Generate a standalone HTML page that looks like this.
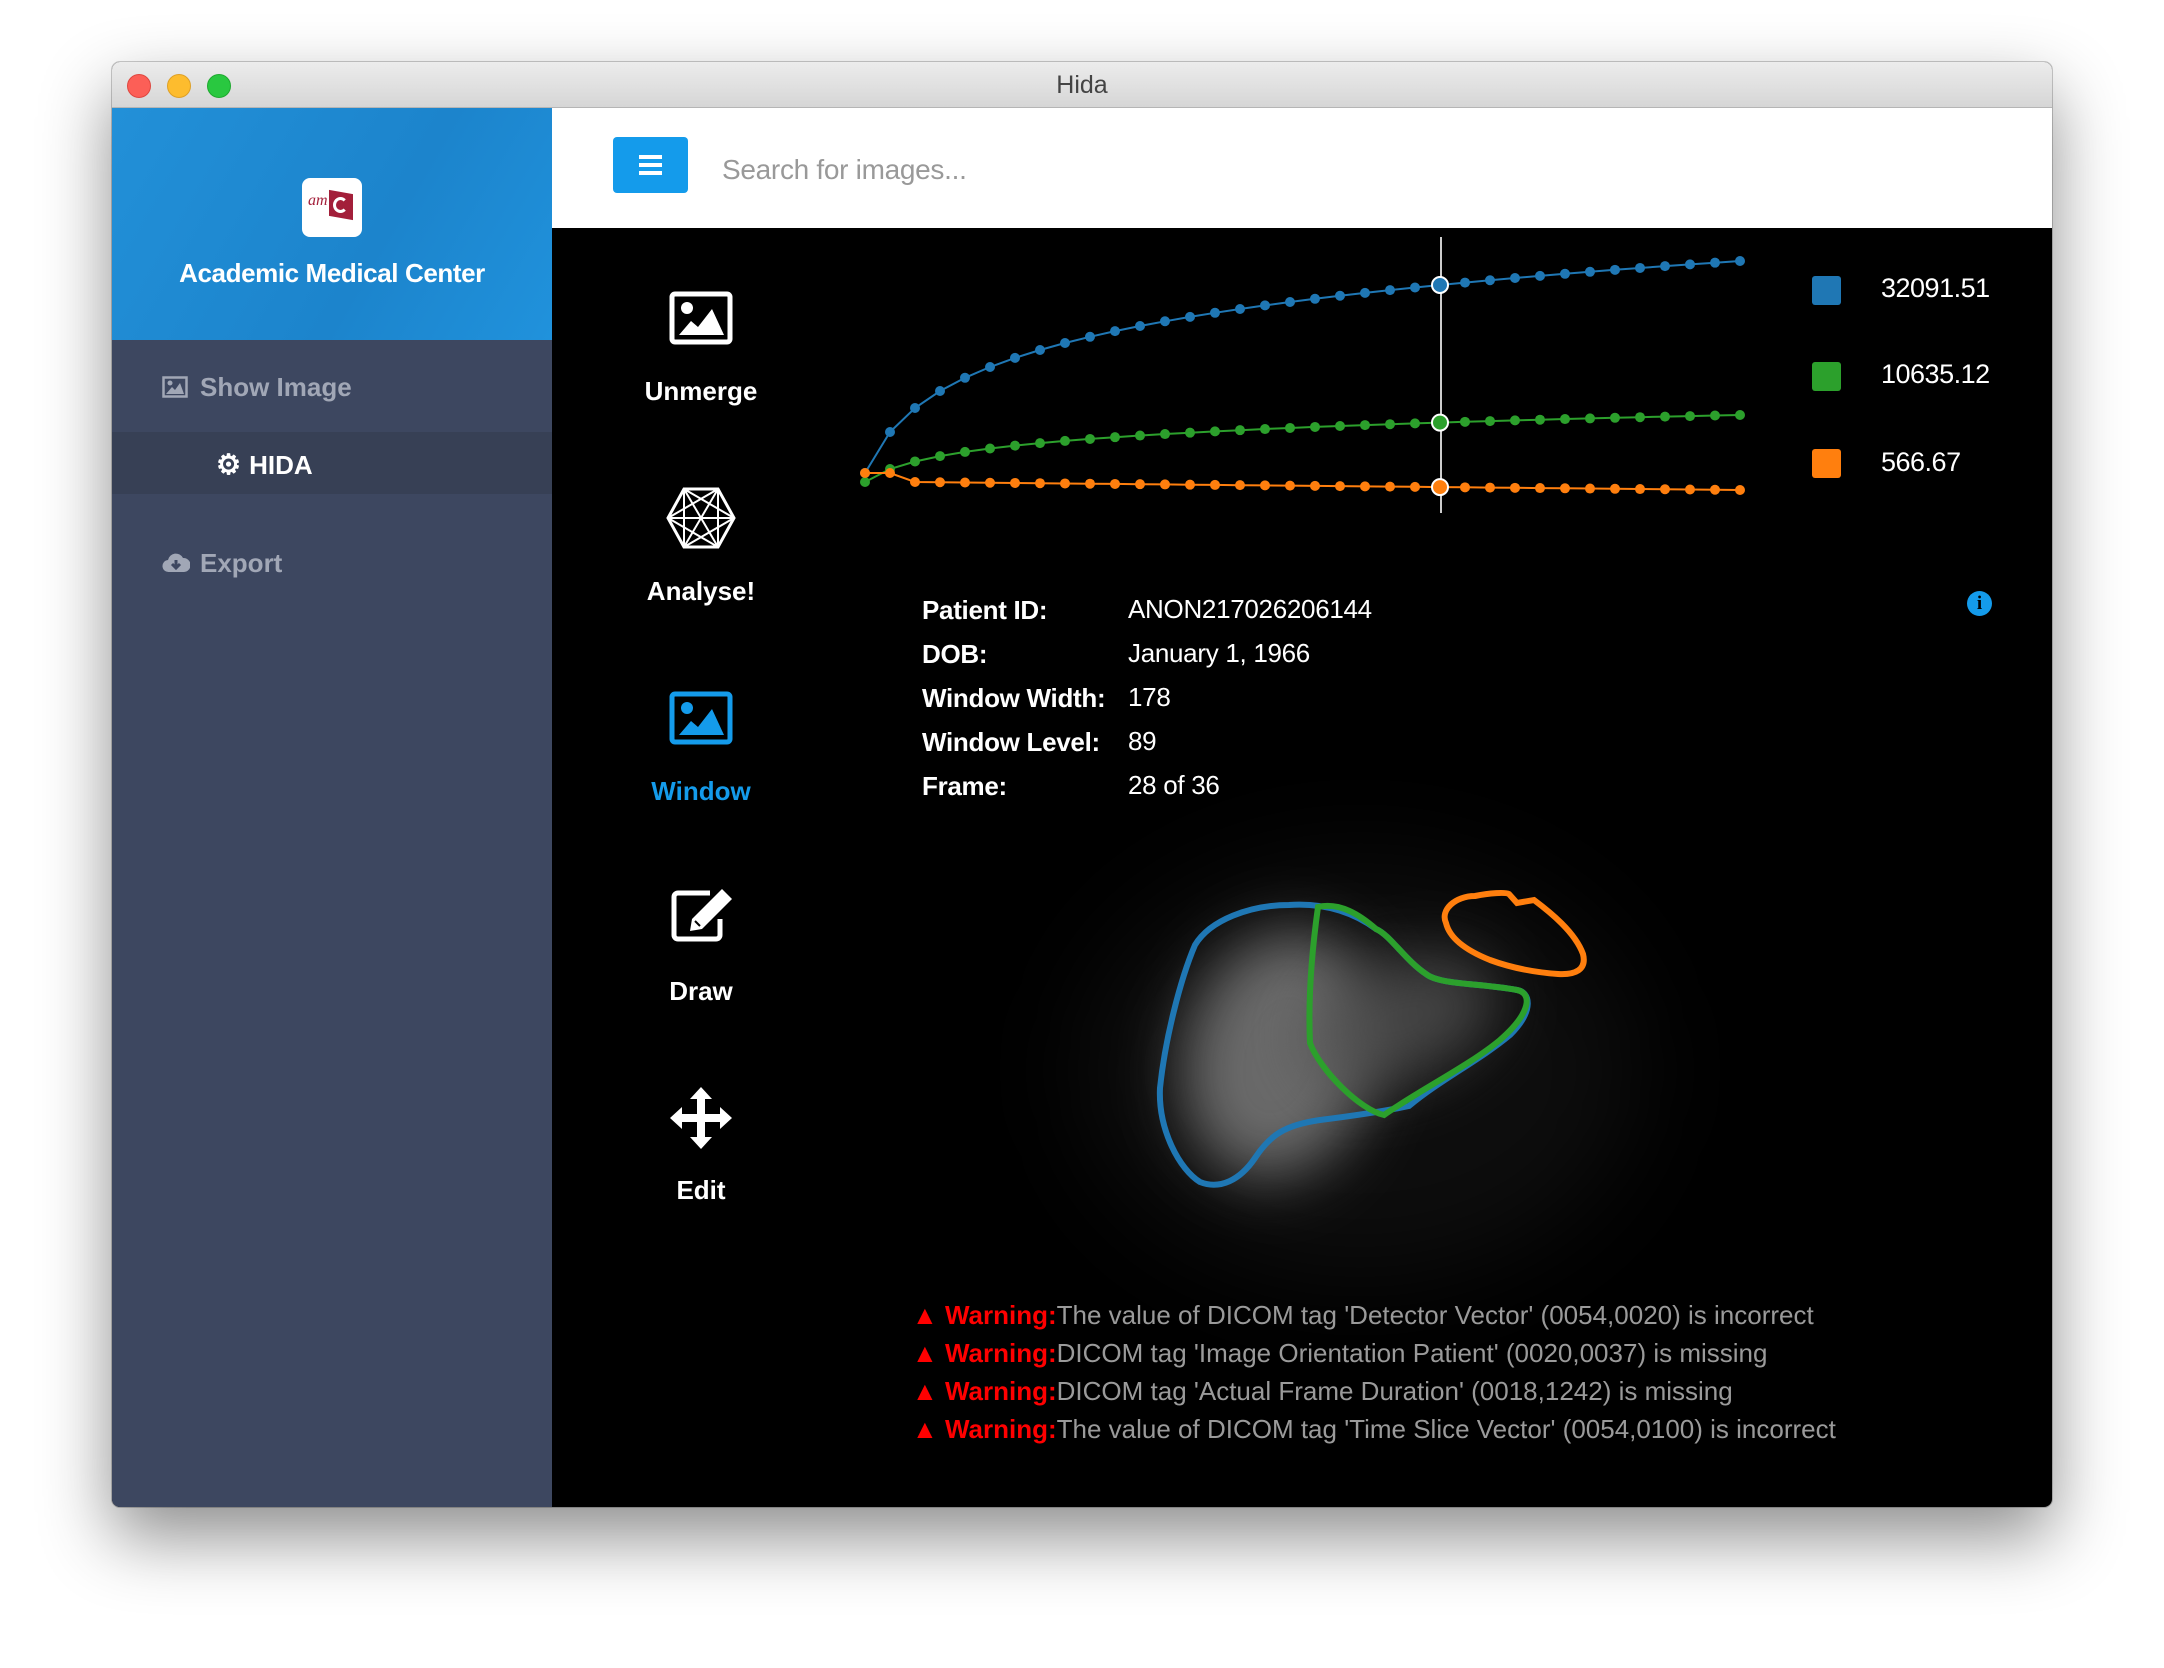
<!DOCTYPE html>
<html><head><meta charset="utf-8">
<style>
*{margin:0;padding:0;box-sizing:border-box}
body{width:2164px;height:1668px;background:#fff;font-family:"Liberation Sans",Arial,sans-serif;position:relative;overflow:hidden}
.abs{position:absolute}
.win{left:112px;top:62px;width:1940px;height:1445px;border-radius:8px;overflow:hidden;box-shadow:0 30px 70px rgba(0,0,0,.45),0 0 0 1px rgba(0,0,0,.2);background:#000}
.title{left:0;top:0;width:1940px;height:46px;background:linear-gradient(#ececec,#d6d6d6);border-bottom:1px solid #b5b5b5;text-align:center;font-size:25px;line-height:46px;color:#444}
.dot{top:12px;width:24px;height:24px;border-radius:50%}
.side{left:0;top:46px;width:440px;height:1399px;background:#3d4760}
.head{left:0;top:0;width:440px;height:232px;background:linear-gradient(120deg,#2290d8,#1c84cc 60%,#2092dc)}
.lbl{color:#fff;font-weight:bold;font-size:26px;text-align:center;width:200px;left:489px}
.k{left:922px;color:#fff;font-weight:bold;font-size:26px;letter-spacing:-0.3px}
.v{left:1016px;color:#fff;font-size:26px;letter-spacing:-0.3px}
.w{left:800px;font-size:26px;color:#9a9a9a;white-space:nowrap;letter-spacing:0}
.w b{color:#f00}
</style></head><body>
<div class="abs win">
  <div class="abs title">Hida
    <div class="abs dot" style="left:15px;background:#fc5f57;border:1px solid #de4740"></div>
    <div class="abs dot" style="left:55px;background:#fdbc2e;border:1px solid #dea026"></div>
    <div class="abs dot" style="left:95px;background:#29c840;border:1px solid #1ea92f"></div>
  </div>
  <div class="abs side">
    <div class="abs head">
      <div class="abs" style="left:190px;top:70px;width:60px;height:59px;background:#fff;border-radius:8px">
        <span class="abs" style="left:6px;top:14px;font-family:'Liberation Serif',serif;font-style:italic;font-size:16px;color:#a31f3a">am</span>
        <div class="abs" style="left:27px;top:14px;width:24px;height:26px;background:#a31f3a;transform:skewY(10deg)"></div>
        <div class="abs" style="left:31px;top:19px;width:15px;height:16px;border:3px solid #fff;border-right-color:transparent;border-radius:50%"></div>
      </div>
      <div class="abs" style="left:0;width:440px;top:150px;text-align:center;color:#fff;font-weight:bold;font-size:26px;letter-spacing:-0.4px">Academic Medical Center</div>
    </div>
    <div class="abs" style="left:50px;top:264px;color:#a1a7b6;font-weight:bold;font-size:26px">
      <svg width="26" height="22" viewBox="0 0 26 22" style="vertical-align:-2px;margin-right:12px"><rect x="1.5" y="1.5" width="23" height="19" fill="none" stroke="#a1a7b6" stroke-width="2.5"/><circle cx="8" cy="7" r="2.5" fill="#a1a7b6"/><path d="M4 18 L10 11 L13 14 L18 7 L22 18Z" fill="#a1a7b6"/></svg>Show Image</div>
    <div class="abs" style="left:0;top:324px;width:440px;height:62px;background:#374055"></div>
    <div class="abs" style="left:104px;top:340px;color:#fff;font-weight:bold;font-size:26px">
      <span style="font-size:28px;margin-right:8px">⚙</span>HIDA</div>
    <div class="abs" style="left:50px;top:440px;color:#a1a7b6;font-weight:bold;font-size:26px">
      <svg width="28" height="22" viewBox="0 0 28 22" style="vertical-align:-2px;margin-right:10px"><path d="M7 20 A6 6 0 0 1 6 8 A8 8 0 0 1 21 6 A6 6 0 0 1 22 20Z" fill="#a1a7b6"/><path d="M14 8 V16 M10 12 L14 16 L18 12" stroke="#3d4760" stroke-width="3" fill="none"/></svg>Export</div>
  </div>
  <div class="abs" style="left:440px;top:46px;width:1500px;height:120px;background:#fff">
    <div class="abs" style="left:61px;top:29px;width:75px;height:56px;background:#149beb;border-radius:4px">
      <div class="abs" style="left:26px;top:18px;width:23px;height:4px;background:#fff"></div>
      <div class="abs" style="left:26px;top:26px;width:23px;height:4px;background:#fff"></div>
      <div class="abs" style="left:26px;top:34px;width:23px;height:4px;background:#fff"></div>
    </div>
    <div class="abs" style="left:170px;top:46px;font-size:28px;color:#999;letter-spacing:-0.3px">Search for images...</div>
  </div>
</div>

<svg class="abs" style="left:669px;top:291px" width="64" height="54" viewBox="0 0 64 54"><rect x="3" y="3" width="58" height="48" rx="3" fill="none" stroke="#fff" stroke-width="5"/><circle cx="18" cy="17" r="6" fill="#fff"/><path d="M10 44 L22 30 L29 36 L43 18 L55 44Z" fill="#fff"/></svg>
<div class="abs lbl" style="top:376px;left:601px">Unmerge</div>
<svg class="abs" style="left:666px;top:486px" width="70" height="64" viewBox="0 0 70 64" fill="none" stroke="#fff" stroke-width="2"><path d="M18 3 H52 L68 32 L52 61 H18 L2 32Z" stroke-width="3"/><path d="M18 3 L52 61 M52 3 L18 61 M2 32 L52 3 M2 32 L52 61 M68 32 L18 3 M68 32 L18 61 M18 3 L18 61 M52 3 L52 61 M2 32 H68"/></svg>
<div class="abs lbl" style="top:576px;left:601px">Analyse!</div>
<svg class="abs" style="left:669px;top:691px" width="64" height="54" viewBox="0 0 64 54"><rect x="3" y="3" width="58" height="48" rx="3" fill="none" stroke="#149beb" stroke-width="5"/><circle cx="18" cy="17" r="6" fill="#149beb"/><path d="M10 44 L22 30 L29 36 L43 18 L55 44Z" fill="#149beb"/></svg>
<div class="abs lbl" style="top:776px;left:601px;color:#149beb">Window</div>
<svg class="abs" style="left:670px;top:887px" width="64" height="56" viewBox="0 0 64 56"><path d="M40 6 H8 A4 4 0 0 0 4 10 V48 A4 4 0 0 0 8 52 H46 A4 4 0 0 0 50 48 V32" fill="none" stroke="#fff" stroke-width="5"/><path d="M52 2 L62 12 L32 42 L20 44 L22 32Z" fill="#fff"/><path d="M25 34 L30 39" stroke="#000" stroke-width="2"/></svg>
<div class="abs lbl" style="top:976px;left:601px">Draw</div>
<svg class="abs" style="left:670px;top:1087px" width="62" height="62" viewBox="0 0 62 62" fill="#fff"><path d="M31 0 L42 12 H35 V27 H50 V20 L62 31 L50 42 V35 H35 V50 H42 L31 62 L20 50 H27 V35 H12 V42 L0 31 L12 20 V27 H27 V12 H20Z"/></svg>
<div class="abs lbl" style="top:1175px;left:601px">Edit</div>

<!-- liver blob -->
<div class="abs" style="left:1080px;top:860px;width:560px;height:420px;border-radius:50%;background:rgba(25,25,25,.5);filter:blur(50px)"></div>
<div class="abs" style="left:1185px;top:930px;width:190px;height:250px;border-radius:50%;background:rgba(115,115,115,.9);filter:blur(30px);transform:rotate(15deg)"></div>
<div class="abs" style="left:1300px;top:960px;width:200px;height:120px;border-radius:50%;background:rgba(80,80,80,.8);filter:blur(30px);transform:rotate(-20deg)"></div>

<svg class="abs" style="left:0;top:0" width="2164" height="1668" id="ch" fill="none">
<line x1="1441" y1="237" x2="1441" y2="513" stroke="#ccc" stroke-width="2"/>
<path d="M1289 905 C1250 905 1210 920 1195 945 C1180 980 1165 1040 1160 1088 C1158 1130 1180 1170 1200 1182 C1220 1190 1240 1180 1255 1158 C1270 1135 1285 1125 1320 1120 C1360 1115 1390 1110 1409 1106 C1440 1080 1480 1060 1510 1035 C1535 1010 1530 992 1517 990 C1480 983 1440 985 1426 974 C1405 960 1390 935 1376 929 C1350 910 1320 903 1289 905Z" stroke="#1f77b4" stroke-width="6"/>
<path d="M1318 907 C1312 950 1308 1000 1310 1043 C1320 1070 1360 1110 1384 1115 C1420 1090 1470 1065 1500 1040 C1532 1012 1532 993 1517 990 C1480 983 1440 985 1426 974 C1405 960 1390 935 1376 929 C1360 915 1340 902 1318 907Z" stroke="#2ca02c" stroke-width="6"/>
<path d="M1446 923 C1440 910 1455 896 1475 896 C1490 893 1505 892 1509 894 L1517 903 L1534 900 C1550 912 1575 932 1583 954 C1587 970 1575 975 1558 974 C1530 972 1509 967 1490 960 C1470 952 1450 940 1446 923Z" stroke="#ff7f0e" stroke-width="6"/>
</svg>

<div class="abs" style="left:1812px;top:276px;width:29px;height:29px;background:#1f77b4;border-radius:3px"></div>
<div class="abs" style="left:1812px;top:362px;width:29px;height:29px;background:#2ca02c;border-radius:3px"></div>
<div class="abs" style="left:1812px;top:449px;width:29px;height:29px;background:#ff7f0e;border-radius:3px"></div>
<div class="abs" style="left:1881px;top:273px;color:#fff;font-size:27px;letter-spacing:-0.5px">32091.51</div>
<div class="abs" style="left:1881px;top:359px;color:#fff;font-size:27px;letter-spacing:-0.5px">10635.12</div>
<div class="abs" style="left:1881px;top:447px;color:#fff;font-size:27px;letter-spacing:-0.5px">566.67</div>

<div class="abs" style="left:1967px;top:591px;width:25px;height:25px;border-radius:50%;background:#149beb;color:#000;font-weight:bold;font-size:19px;text-align:center;line-height:25px;font-family:'Liberation Serif',serif">i</div>

<div class="abs k" style="top:595px">Patient ID:</div><div class="abs v" style="left:1128px;top:594px">ANON217026206144</div>
<div class="abs k" style="top:639px">DOB:</div><div class="abs v" style="left:1128px;top:638px">January 1, 1966</div>
<div class="abs k" style="top:683px">Window Width:</div><div class="abs v" style="left:1128px;top:682px">178</div>
<div class="abs k" style="top:727px">Window Level:</div><div class="abs v" style="left:1128px;top:726px">89</div>
<div class="abs k" style="top:771px">Frame:</div><div class="abs v" style="left:1128px;top:770px">28 of 36</div>

<div class="abs w" style="left:912px;top:1300px"><b>▲ Warning:</b>The value of DICOM tag 'Detector Vector' (0054,0020) is incorrect</div>
<div class="abs w" style="left:912px;top:1338px"><b>▲ Warning:</b>DICOM tag 'Image Orientation Patient' (0020,0037) is missing</div>
<div class="abs w" style="left:912px;top:1376px"><b>▲ Warning:</b>DICOM tag 'Actual Frame Duration' (0018,1242) is missing</div>
<div class="abs w" style="left:912px;top:1414px"><b>▲ Warning:</b>The value of DICOM tag 'Time Slice Vector' (0054,0100) is incorrect</div>

<script>
(function(){
var s=document.getElementById('ch'),ns='http://www.w3.org/2000/svg',L=Math.log(36);
function X(i){return 865+25*i;}
var series=[
 ['#1f77b4',function(i){return 473-212*Math.log(1+i)/L;}],
 ['#2ca02c',function(i){return 482-67*Math.log(1+i)/L;}],
 ['#ff7f0e',function(i){return i<2?473:482+8*(i-2)/33;}]
];
series.forEach(function(sr){
 var d='';for(var i=0;i<36;i++){d+=(i?'L':'M')+X(i)+' '+sr[1](i).toFixed(1);}
 var p=document.createElementNS(ns,'path');p.setAttribute('d',d);p.setAttribute('stroke',sr[0]);p.setAttribute('stroke-width','2');s.appendChild(p);
 for(var i=0;i<36;i++){var c=document.createElementNS(ns,'circle');c.setAttribute('cx',X(i));c.setAttribute('cy',sr[1](i));
  if(i==23){c.setAttribute('r','8');c.setAttribute('stroke','#fff');c.setAttribute('stroke-width','2');}else c.setAttribute('r','5');
  c.setAttribute('fill',sr[0]);s.appendChild(c);}
});
})();
</script>
</body></html>
